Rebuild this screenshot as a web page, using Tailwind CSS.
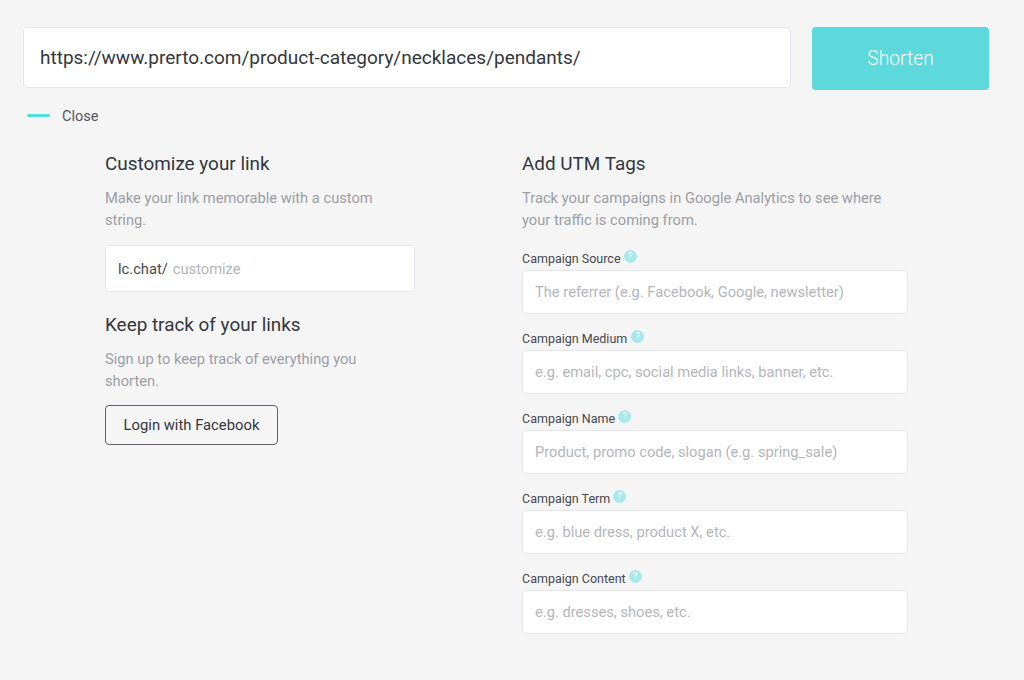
<!DOCTYPE html>
<html lang="en">
<head>
    <meta charset="UTF-8">
    <title>Shorten a link</title>
    <script src="https://cdn.jsdelivr.net/npm/@tailwindcss/browser@4"></script>
</head>
<body class="bg-[#f5f5f6] h-[680px] overflow-hidden font-['Roboto',sans-serif] text-[#33373d]">
    <div class="pt-[27px] pl-[23px] w-[1024px]">
        <!-- URL bar -->
        <div class="flex items-start gap-[21px]">
            <div class="w-[768px] h-[61px] bg-white border border-[#e6e7ec] rounded-[4px] pl-[16px] pt-[2px] flex items-center text-[19px]">https://www.prerto.com/product-category/necklaces/pendants/</div>
            <button class="w-[177px] h-[63px] pt-[1px] bg-[#5dd8db] rounded-[4px] text-white text-[19.3px] font-light">Shorten</button>
        </div>

        <!-- Close -->
        <div class="flex items-center mt-[16px] h-[18px] pl-[4px]">
            <span class="w-[23px] h-[3px] bg-[#55dbe2] rounded-full"></span>
            <span class="ml-[12px] mt-[4px] text-[14.5px] text-[#53575d]">Close</span>
        </div>

        <div class="flex mt-[28px] pl-[82px]">
            <!-- Left column -->
            <div class="w-[417px]">
                <h2 class="text-[18.9px] leading-[24px]">Customize your link</h2>
                <p class="mt-[11px] w-[290px] text-[14.7px] leading-[22px] text-[#9b9ea3]">Make your link memorable with a custom string.</p>
                <div class="mt-[14px] w-[310px] h-[47px] bg-white border border-[#e6e7ec] rounded-[4px] pl-[12px] pt-[2px] flex items-center text-[14.7px]">
                    <span class="text-[#45494f]">lc.chat/</span>
                    <span class="ml-[5px] text-[#b4b6ba]">customize</span>
                </div>
                <h2 class="mt-[21px] text-[18.9px] leading-[24px]">Keep track of your links</h2>
                <p class="mt-[11px] w-[290px] text-[14.7px] leading-[22px] text-[#9b9ea3]">Sign up to keep track of everything you shorten.</p>
                <button class="mt-[13px] w-[173px] h-[40px] border-[1.5px] border-[#5f6368] rounded-[4px] text-[14.8px] text-[#33373d]">Login with Facebook</button>
            </div>

            <!-- Right column -->
            <div class="w-[386px]">
                <h2 class="text-[18.9px] leading-[24px]">Add UTM Tags</h2>
                <p class="mt-[11px] w-[380px] text-[14.7px] leading-[22px] text-[#9b9ea3]">Track your campaigns in Google Analytics to see where your traffic is coming from.</p>

                <div class="mt-[19px]">
                    <div class="flex items-start h-[18px] text-[12.5px] leading-[18px] text-[#45494f]">Campaign Source<span class="ml-[3px] w-[13px] h-[13px] rounded-full bg-[#a9e8ea] text-white text-[9px] leading-[13px] text-center">?</span></div>
                    <div class="mt-[2px] h-[44px] pt-[1px] bg-white border border-[#e6e7ec] rounded-[4px] pl-[12px] flex items-center text-[14.7px] text-[#b4b6ba]">The referrer (e.g. Facebook, Google, newsletter)</div>
                </div>
                <div class="mt-[16px]">
                    <div class="flex items-start h-[18px] text-[12.5px] leading-[18px] text-[#45494f]">Campaign Medium<span class="ml-[4px] w-[13px] h-[13px] rounded-full bg-[#a9e8ea] text-white text-[9px] leading-[13px] text-center">?</span></div>
                    <div class="mt-[2px] h-[44px] pt-[1px] bg-white border border-[#e6e7ec] rounded-[4px] pl-[12px] flex items-center text-[14.7px] text-[#b4b6ba]">e.g. email, cpc, social media links, banner, etc.</div>
                </div>
                <div class="mt-[16px]">
                    <div class="flex items-start h-[18px] text-[12.5px] leading-[18px] text-[#45494f]">Campaign Name<span class="ml-[3px] w-[13px] h-[13px] rounded-full bg-[#a9e8ea] text-white text-[9px] leading-[13px] text-center">?</span></div>
                    <div class="mt-[2px] h-[44px] pt-[1px] bg-white border border-[#e6e7ec] rounded-[4px] pl-[12px] flex items-center text-[14.7px] text-[#b4b6ba]">Product, promo code, slogan (e.g. spring_sale)</div>
                </div>
                <div class="mt-[16px]">
                    <div class="flex items-start h-[18px] text-[12.5px] leading-[18px] text-[#45494f]">Campaign Term<span class="ml-[3px] w-[13px] h-[13px] rounded-full bg-[#a9e8ea] text-white text-[9px] leading-[13px] text-center">?</span></div>
                    <div class="mt-[2px] h-[44px] pt-[1px] bg-white border border-[#e6e7ec] rounded-[4px] pl-[12px] flex items-center text-[14.7px] text-[#b4b6ba]">e.g. blue dress, product X, etc.</div>
                </div>
                <div class="mt-[16px]">
                    <div class="flex items-start h-[18px] text-[12.5px] leading-[18px] text-[#45494f]">Campaign Content<span class="ml-[3px] w-[13px] h-[13px] rounded-full bg-[#a9e8ea] text-white text-[9px] leading-[13px] text-center">?</span></div>
                    <div class="mt-[2px] h-[44px] pt-[1px] bg-white border border-[#e6e7ec] rounded-[4px] pl-[12px] flex items-center text-[14.7px] text-[#b4b6ba]">e.g. dresses, shoes, etc.</div>
                </div>
            </div>
        </div>
    </div>
</body>
</html>
